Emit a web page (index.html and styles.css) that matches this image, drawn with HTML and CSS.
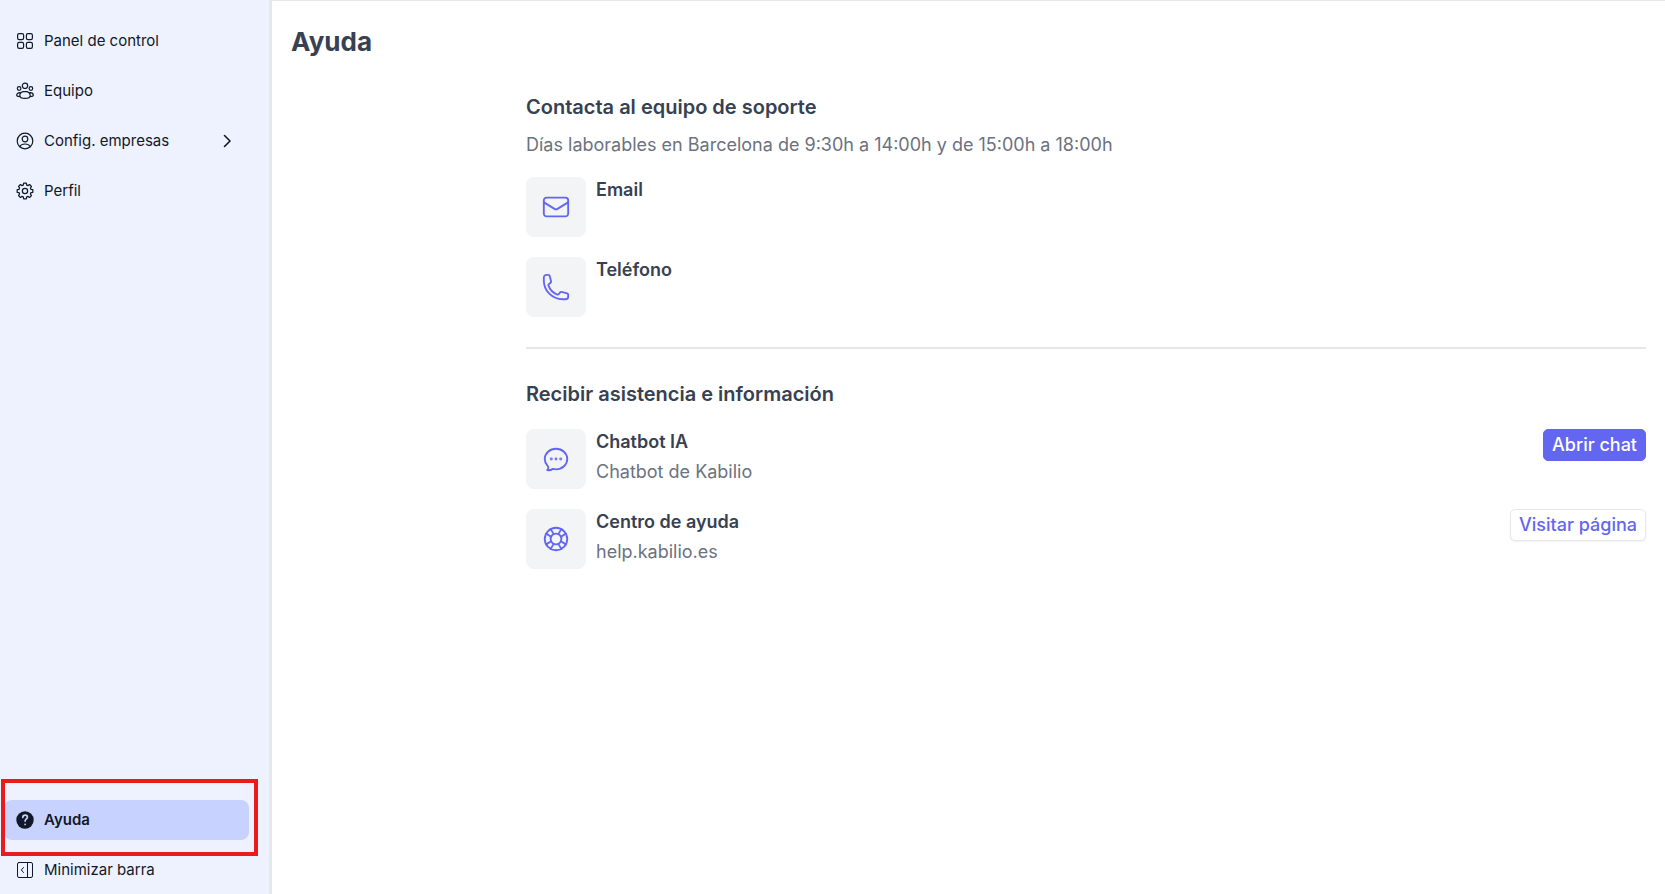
FILE: index.html
```html
<!DOCTYPE html>
<html lang="es">
<head>
  <meta charset="UTF-8" />
  <meta name="viewport" content="width=device-width, initial-scale=1.0"/>
  <title>Ayuda</title>
  <link rel="stylesheet" href="styles.css">
</head>
<body>

<aside class="sidebar">
  <nav class="nav">
    <a class="nav-item" href="#panel">
      <svg class="nav-icon" viewBox="0 0 18 18"><rect x="1.6" y="1.6" width="6" height="6" rx="1.6"/><rect x="10.4" y="1.6" width="6" height="6" rx="1.6"/><rect x="1.6" y="10.4" width="6" height="6" rx="1.6"/><rect x="10.4" y="10.4" width="6" height="6" rx="1.6"/></svg>
      Panel de control
    </a>
    <a class="nav-item" href="#equipo">
      <svg class="nav-icon" viewBox="0 0 18 18"><circle cx="9" cy="3.8" r="2.7"/><circle cx="3.1" cy="6.5" r="1.8"/><circle cx="14.9" cy="6.5" r="1.8"/><path d="M9 9.3c-3.2 0-5.2 2-5.2 4.2 0 1.600 2.300 2.900 5.200 2.900s5.200-1.300 5.200-2.900c0-2.200-2-4.200-5.200-4.200zM4 10.700c-2.100 0-3.300 1.300-3.300 2.600 0 .8 1.300 1.300 3.300 1.400M14 10.700c2.100 0 3.300 1.300 3.300 2.600 0 .8-1.300 1.300-3.300 1.400"/></svg>
      Equipo
    </a>
    <a class="nav-item" href="#empresas">
      <svg class="nav-icon" viewBox="0 0 18 18"><circle cx="9" cy="9" r="7.8"/><circle cx="9" cy="7" r="2.8"/><path d="M3.700 14.600C4.600 12.900 6.600 12 9 12s4.400.9 5.300 2.600"/></svg>
      Config. empresas
      <svg class="chevron" viewBox="0 0 18 18"><path d="M6.500 3.500 12 9l-5.500 5.500"/></svg>
    </a>
    <a class="nav-item" href="#perfil">
      <svg class="nav-icon" viewBox="-1 -1 26 26"><g stroke-width="1.800"><path d="M10.100 1.700h3.800l.6 2.800 1.700.7 2.400-1.500 2.700 2.700-1.500 2.400.7 1.700 2.800.6v3.800l-2.800.6-.7 1.700 1.500 2.400-2.700 2.700-2.400-1.500-1.700.7-.6 2.800h-3.800l-.6-2.800-1.700-.7-2.400 1.500-2.700-2.700 1.500-2.400-.7-1.700-2.800-.6v-3.800l2.800-.6.7-1.700-1.500-2.400 2.700-2.700 2.400 1.500 1.700-.7z" transform="translate(0 -1)"/><circle cx="12" cy="12" r="3.800"/></g></svg>
      Perfil
    </a>
  </nav>

  <nav class="nav">
    <div class="highlighted">
      <a class="nav-item active" href="#ayuda">
        <svg class="nav-icon" viewBox="0 0 18 18"><circle cx="9" cy="9" r="8.700" fill="#111827" stroke="none"/><g stroke="#c7d2fe" stroke-width="1.700"><path d="M6.800 6.500C6.900 5 7.800 4.200 9.100 4.200c1.300 0 2.300.8 2.300 2 0 1.700-2.300 1.700-2.300 3.900"/><path d="M9.100 13.300v.1"/></g></svg>
        Ayuda
      </a>
    </div>
    <button class="nav-item" type="button">
      <svg class="nav-icon thin" viewBox="0 0 18 18"><rect x="1.500" y="1.500" width="15" height="15" rx="1.500"/><path d="M11.500 1.500v15M7.500 6.500 5.300 9l2.200 2.500"/></svg>
      Minimizar barra
    </button>
  </nav>
</aside>

<main class="main">
  <h1>Ayuda</h1>

  <div class="content">
    <section class="support">
      <h2>Contacta al equipo de soporte</h2>
      <p class="hours">Días laborables en Barcelona de 9:30h a 14:00h y de 15:00h a 18:00h</p>
      <div class="rows">
        <div class="row">
          <div class="icon-box">
            <svg viewBox="0 0 24 24"><path d="M21.750 6.750v10.500a2.250 2.250 0 0 1-2.250 2.250h-15a2.250 2.250 0 0 1-2.250-2.250V6.750m19.500 0A2.250 2.250 0 0 0 19.500 4.500h-15a2.250 2.250 0 0 0-2.250 2.250m19.500 0v.243a2.250 2.250 0 0 1-1.070 1.916l-7.500 4.615a2.250 2.250 0 0 1-2.360 0L3.320 8.910a2.250 2.250 0 0 1-1.070-1.916V6.750"/></svg>
          </div>
          <h3>Email</h3>
        </div>
        <div class="row">
          <div class="icon-box">
            <svg viewBox="0 0 24 24"><path d="M2.250 6.750c0 8.284 6.716 15 15 15h2.250a2.250 2.250 0 0 0 2.250-2.250v-1.372c0-.516-.351-.966-.852-1.091l-4.423-1.106c-.44-.11-.902.055-1.173.417l-.970 1.293c-.282.376-.769.542-1.210.380a12.035 12.035 0 0 1-7.143-7.143c-.162-.441.004-.928.380-1.210l1.293-.970c.363-.271.527-.734.417-1.173L6.963 3.102a1.125 1.125 0 0 0-1.091-.852H4.500A2.250 2.250 0 0 0 2.250 4.500v2.250Z"/></svg>
          </div>
          <h3>Teléfono</h3>
        </div>
      </div>
    </section>

    <section class="resources">
      <h2>Recibir asistencia e información</h2>
      <div class="rows">
        <div class="row">
          <div class="icon-box">
            <svg viewBox="0 0 24 24"><path d="M8.625 12a.375.375 0 1 1-.750 0 .375.375 0 0 1 .750 0Zm3.750 0a.375.375 0 1 1-.750 0 .375.375 0 0 1 .750 0Zm3.750 0a.375.375 0 1 1-.750 0 .375.375 0 0 1 .750 0ZM12 20.250c4.970 0 9-3.694 9-8.250s-4.030-8.250-9-8.250S3 7.444 3 12c0 2.104.859 4.023 2.273 5.480.432.447.740 1.040.586 1.641a4.483 4.483 0 0 1-.923 1.785A5.969 5.969 0 0 0 6 21c1.282 0 2.470-.402 3.445-1.087.810.220 1.668.337 2.555.337Z"/></svg>
          </div>
          <div class="info">
            <h3>Chatbot IA</h3>
            <p>Chatbot de Kabilio</p>
          </div>
          <button class="btn btn-primary" type="button">Abrir chat</button>
        </div>
        <div class="row">
          <div class="icon-box">
            <svg viewBox="0 0 24 24"><circle cx="12" cy="12" r="9"/><circle cx="12" cy="12" r="4.300"/><path d="M7.700 4.100 10.200 8.100M4.100 7.700l4 2.500M16.300 4.100l-2.500 4M19.900 7.700l-4 2.500M7.700 19.900l2.500-4M4.100 16.300l4-2.500M16.300 19.900l-2.500-4M19.900 16.300l-4-2.500"/></svg>
          </div>
          <div class="info">
            <h3>Centro de ayuda</h3>
            <p>help.kabilio.es</p>
          </div>
          <a class="btn btn-outline" href="#centro-de-ayuda">Visitar página</a>
        </div>
      </div>
    </section>
  </div>
</main>

</body>
</html>
```
FILE: styles.css
```css
* {
  box-sizing: border-box;
}
body {
  margin: 0;
  min-height: 100vh;
  display: flex;
  font-family: Inter, sans-serif;
  color: #374151;
  background: #fff;
}
h1, h2, h3, p {
  margin: 0;
}
svg {
  fill: none;
  stroke: currentColor;
  stroke-width: 1.5;
  stroke-linecap: round;
  stroke-linejoin: round;
}

/* Sidebar */
.sidebar {
  flex: 0 0 272px;
  display: flex;
  flex-direction: column;
  justify-content: space-between;
  padding: 21px 20px 4px 4px;
  background: #eef2ff;
  border-right: 3px solid #e5e7eb;
}
.nav {
  display: flex;
  flex-direction: column;
  gap: 10px;
}
.nav-item {
  display: flex;
  align-items: center;
  gap: 10px;
  width: 100%;
  height: 40px;
  padding: 0 13px 0 12px;
  border: none;
  border-radius: 8px;
  background: none;
  color: #111827;
  font-family: inherit;
  font-size: 15px;
  line-height: 20px;
  text-decoration: none;
  cursor: pointer;
}
.nav-item.active {
  background: #c7d2fe;
  font-weight: 600;
}
.nav-icon {
  width: 18px;
  height: 18px;
  stroke-width: 1.2;
}
.nav-icon.thin {
  stroke-width: 1;
}
.chevron {
  width: 18px;
  height: 18px;
  margin-left: auto;
  stroke-width: 1.6;
}
.highlighted {
  position: relative;
}
.highlighted::after {
  content: "";
  position: absolute;
  top: -21px;
  right: -9px;
  bottom: -16px;
  left: -3px;
  border: 4px solid #e81c1c;
  pointer-events: none;
}

/* Main */
.main {
  flex: 1;
  padding: 21px 19px;
  border-top: 1px solid #e5e7eb;
}
h1 {
  font-size: 26px;
  line-height: 40px;
  font-weight: 700;
}
h2 {
  font-size: 20px;
  line-height: 28px;
  font-weight: 600;
}
h3 {
  font-size: 18px;
  line-height: 26px;
  font-weight: 600;
}
.content {
  max-width: 1120px;
  margin: 31px 0 0 auto;
}
.support {
  padding-bottom: 30px;
  border-bottom: 2px solid #e5e7eb;
}
.resources {
  padding-top: 31px;
}
.hours {
  margin-top: 10px;
  color: #6b7280;
  font-size: 18px;
  line-height: 28px;
}
.rows {
  display: flex;
  flex-direction: column;
  gap: 20px;
  margin-top: 18px;
}
.resources .rows {
  margin-top: 21px;
}
.row {
  display: flex;
  align-items: flex-start;
  gap: 10px;
}
.icon-box {
  display: flex;
  align-items: center;
  justify-content: center;
  width: 60px;
  height: 60px;
  border-radius: 8px;
  background: #f3f4f6;
  color: #6366f1;
}
.icon-box svg {
  width: 30px;
  height: 30px;
}
.info {
  display: flex;
  flex-direction: column;
  gap: 4px;
}
.info p {
  color: #6b7280;
  font-size: 18px;
  line-height: 26px;
}
.btn {
  margin-left: auto;
  padding: 2px 8px;
  border: 1px solid #6366f1;
  border-radius: 5px;
  font-family: inherit;
  font-size: 18px;
  line-height: 26px;
  font-weight: 500;
  text-decoration: none;
  cursor: pointer;
}
.btn-primary {
  background: #6366f1;
  color: #fff;
}
.btn-outline {
  border-color: #e5e7eb;
  background: #fff;
  color: #6366f1;
  box-shadow: 0 1px 2px rgba(0,0,0,0.05);
}
```
